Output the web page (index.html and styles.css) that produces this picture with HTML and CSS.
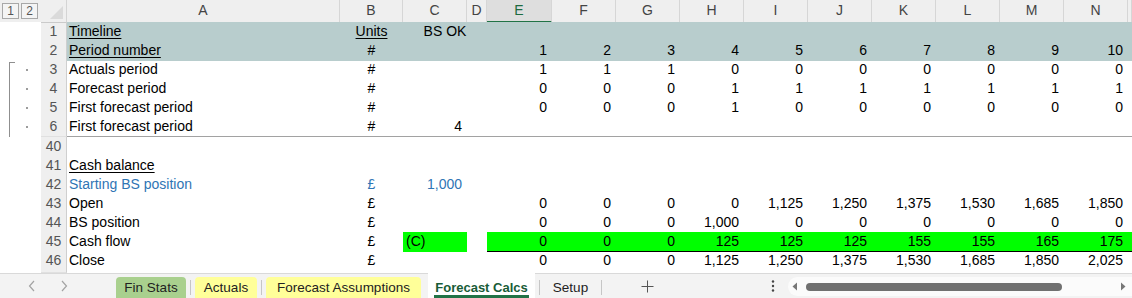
FILE: index.html
```html
<!DOCTYPE html>
<html lang="en">
<head>
    <meta charset="UTF-8">
    <title>Forecast Calcs</title>
    <link rel="stylesheet" href="styles.css">
</head>
<body>
<div class="app">
    <div class="sheet">
        <div class="colhead">
            <div class="levels"><span class="lvl">1</span><span class="lvl">2</span></div>
            <div class="corner"></div>
            <div class="ch">A</div>
            <div class="ch">B</div>
            <div class="ch">C</div>
            <div class="ch">D</div>
            <div class="ch sel">E</div>
            <div class="ch">F</div>
            <div class="ch">G</div>
            <div class="ch">H</div>
            <div class="ch">I</div>
            <div class="ch">J</div>
            <div class="ch">K</div>
            <div class="ch">L</div>
            <div class="ch">M</div>
            <div class="ch">N</div>
            <div class="ch"></div>
        </div>

        <div class="row band">
            <div class="gut"></div><div class="rh">1</div>
            <div class="c"><u>Timeline</u></div>
            <div class="c ctr"><u>Units</u></div>
            <div class="c ctr span2">BS OK</div>
            <div class="c"></div><div class="c"></div><div class="c"></div><div class="c"></div><div class="c"></div>
            <div class="c"></div><div class="c"></div><div class="c"></div><div class="c"></div><div class="c"></div>
            <div class="c"></div>
        </div>
        <div class="row band">
            <div class="gut"></div><div class="rh">2</div>
            <div class="c"><u>Period number</u></div>
            <div class="c ctr">#</div>
            <div class="c"></div><div class="c"></div>
            <div class="c n">1</div><div class="c n">2</div><div class="c n">3</div><div class="c n">4</div><div class="c n">5</div>
            <div class="c n">6</div><div class="c n">7</div><div class="c n">8</div><div class="c n">9</div><div class="c n">10</div>
            <div class="c"></div>
        </div>
        <div class="row">
            <div class="gut grp grp-top"><span class="dot"></span></div><div class="rh">3</div>
            <div class="c">Actuals period</div>
            <div class="c ctr">#</div>
            <div class="c"></div><div class="c"></div>
            <div class="c n">1</div><div class="c n">1</div><div class="c n">1</div><div class="c n">0</div><div class="c n">0</div>
            <div class="c n">0</div><div class="c n">0</div><div class="c n">0</div><div class="c n">0</div><div class="c n">0</div>
            <div class="c"></div>
        </div>
        <div class="row">
            <div class="gut grp"><span class="dot"></span></div><div class="rh">4</div>
            <div class="c">Forecast period</div>
            <div class="c ctr">#</div>
            <div class="c"></div><div class="c"></div>
            <div class="c n">0</div><div class="c n">0</div><div class="c n">0</div><div class="c n">1</div><div class="c n">1</div>
            <div class="c n">1</div><div class="c n">1</div><div class="c n">1</div><div class="c n">1</div><div class="c n">1</div>
            <div class="c"></div>
        </div>
        <div class="row">
            <div class="gut grp"><span class="dot"></span></div><div class="rh">5</div>
            <div class="c">First forecast period</div>
            <div class="c ctr">#</div>
            <div class="c"></div><div class="c"></div>
            <div class="c n">0</div><div class="c n">0</div><div class="c n">0</div><div class="c n">1</div><div class="c n">0</div>
            <div class="c n">0</div><div class="c n">0</div><div class="c n">0</div><div class="c n">0</div><div class="c n">0</div>
            <div class="c"></div>
        </div>
        <div class="row">
            <div class="gut grp"><span class="dot"></span></div><div class="rh">6</div>
            <div class="c">First forecast period</div>
            <div class="c ctr">#</div>
            <div class="c n">4</div><div class="c"></div>
            <div class="c"></div><div class="c"></div><div class="c"></div><div class="c"></div><div class="c"></div>
            <div class="c"></div><div class="c"></div><div class="c"></div><div class="c"></div><div class="c"></div>
            <div class="c"></div>
        </div>

        <div class="row hidden-above">
            <div class="gut"></div><div class="rh">40</div>
            <div class="c"></div>
        </div>
        <div class="row">
            <div class="gut"></div><div class="rh">41</div>
            <div class="c"><u>Cash balance</u></div>
        </div>
        <div class="row blue">
            <div class="gut"></div><div class="rh">42</div>
            <div class="c">Starting BS position</div>
            <div class="c ctr">£</div>
            <div class="c n">1,000</div>
        </div>
        <div class="row">
            <div class="gut"></div><div class="rh">43</div>
            <div class="c">Open</div>
            <div class="c ctr">£</div>
            <div class="c"></div><div class="c"></div>
            <div class="c n">0</div><div class="c n">0</div><div class="c n">0</div><div class="c n">0</div><div class="c n">1,125</div>
            <div class="c n">1,250</div><div class="c n">1,375</div><div class="c n">1,530</div><div class="c n">1,685</div><div class="c n">1,850</div>
            <div class="c"></div>
        </div>
        <div class="row">
            <div class="gut"></div><div class="rh">44</div>
            <div class="c">BS position</div>
            <div class="c ctr">£</div>
            <div class="c"></div><div class="c"></div>
            <div class="c n">0</div><div class="c n">0</div><div class="c n">0</div><div class="c n">1,000</div><div class="c n">0</div>
            <div class="c n">0</div><div class="c n">0</div><div class="c n">0</div><div class="c n">0</div><div class="c n">0</div>
            <div class="c"></div>
        </div>
        <div class="row">
            <div class="gut"></div><div class="rh">45</div>
            <div class="c">Cash flow</div>
            <div class="c ctr">£</div>
            <div class="c green flag">(C)</div><div class="c"></div>
            <div class="c n green total">0</div><div class="c n green total">0</div><div class="c n green total">0</div><div class="c n green total">125</div><div class="c n green total">125</div>
            <div class="c n green total">125</div><div class="c n green total">155</div><div class="c n green total">155</div><div class="c n green total">165</div><div class="c n green total">175</div>
            <div class="c green total"></div>
        </div>
        <div class="row">
            <div class="gut"></div><div class="rh">46</div>
            <div class="c">Close</div>
            <div class="c ctr">£</div>
            <div class="c"></div><div class="c"></div>
            <div class="c n">0</div><div class="c n">0</div><div class="c n">0</div><div class="c n">1,125</div><div class="c n">1,250</div>
            <div class="c n">1,375</div><div class="c n">1,530</div><div class="c n">1,685</div><div class="c n">1,850</div><div class="c n">2,025</div>
            <div class="c"></div>
        </div>
        <div class="row stub">
            <div class="gut"></div><div class="rh"></div>
        </div>
    </div>

    <div class="tabbar">
        <div class="tabnav">
            <svg width="8" height="12" viewBox="0 0 8 12"><path d="M6 1 1.5 6 6 11" fill="none" stroke="#a3a3a3" stroke-width="1.2"/></svg>
            <svg width="8" height="12" viewBox="0 0 8 12"><path d="M2 1 6.5 6 2 11" fill="none" stroke="#a3a3a3" stroke-width="1.2"/></svg>
        </div>
        <div class="tab fin">Fin Stats</div>
        <div class="tabsep"></div>
        <div class="tab act">Actuals</div>
        <div class="tabsep"></div>
        <div class="tab assm">Forecast Assumptions</div>
        <div class="tab current"><span>Forecast Calcs</span></div>
        <div class="tabsep"></div>
        <div class="tab setup">Setup</div>
        <div class="tabsep"></div>
        <div class="addsheet">
            <svg width="13" height="13" viewBox="0 0 13 13"><path d="M6.5 0.5v12M0.5 6.5h12" stroke="#555" stroke-width="1"/></svg>
        </div>
        <div class="more">
            <svg width="4" height="14" viewBox="0 0 4 14"><circle cx="2" cy="2.5" r="1.2" fill="#444"/><circle cx="2" cy="7" r="1.2" fill="#444"/><circle cx="2" cy="11.5" r="1.2" fill="#444"/></svg>
        </div>
        <div class="hscroll">
            <svg width="6" height="9" viewBox="0 0 6 9"><path d="M5 0.5v8L0.5 4.5z" fill="#777"/></svg>
            <div class="thumb"></div>
            <svg class="right" width="6" height="9" viewBox="0 0 6 9"><path d="M1 0.5v8l4.5-4z" fill="#777"/></svg>
        </div>
    </div>
</div>
</body>
</html>
```

FILE: styles.css
```css
body {
    margin: 0;
    background-color: #fff;
    color: #000;
    font-family: "Liberation Sans", Arial, sans-serif;
}
.app {
    width: 1132px;
    height: 298px;
    overflow: hidden;
    display: flex;
    flex-direction: column;
}
.sheet {
    flex: 1;
    overflow: hidden;
}
.colhead,
.row {
    display: grid;
    grid-template-columns: 41px 26px 273px 63px 64px 20px 65px repeat(9, 64px) 4px;
}

/* column headers */
.colhead {
    height: 22px;
    background-color: #efefef;
}
.colhead > div {
    box-sizing: border-box;
    border-bottom: 1px solid #cacaca;
}
.levels {
    display: flex;
    gap: 2px;
    padding: 3px 0 0 2px;
}
.lvl {
    width: 17px;
    height: 16px;
    box-sizing: border-box;
    border: 1px solid #a8a8a8;
    background-color: #f4f4f4;
    color: #555;
    font-size: 12px;
    line-height: 15px;
    text-align: center;
}
.corner {
    position: relative;
    border-right: 1px solid #d4d4d4;
}
.corner::after {
    content: "";
    position: absolute;
    right: 3px;
    bottom: 3px;
    border-style: solid;
    border-width: 0 0 13px 13px;
    border-color: transparent transparent #dadada transparent;
}
.ch {
    font-size: 14px;
    color: #444;
    text-align: center;
    line-height: 21px;
    border-right: 1px solid #d6d6d6;
}
.colhead .ch.sel {
    background-color: #dedede;
    color: #1d6b40;
    border-bottom: 2px solid #217346;
}

/* rows */
.row {
    height: 19px;
}
.gut {
    position: relative;
    background-color: #fff;
}
.rh {
    box-sizing: border-box;
    background-color: #efefef;
    color: #555;
    font-size: 14px;
    line-height: 19px;
    text-align: center;
    border-bottom: 1px solid #e0e0e0;
    border-right: 1px solid #cfcfcf;
}
.c {
    box-sizing: border-box;
    font-size: 14px;
    line-height: 19px;
    padding: 0 2px;
    white-space: nowrap;
}
.c u {
    text-underline-offset: 2px;
}
.ctr {
    text-align: center;
}
.span2 {
    grid-column: span 2;
}
.n {
    text-align: right;
    padding-right: 5px;
}
.band .c {
    background-color: #b8cdcd;
}
.blue .c {
    color: #2f75b5;
}
.green {
    background-color: #00ff00;
}
.flag {
    padding-left: 3px;
}
.total {
    border-bottom: 1px solid #000;
}
.hidden-above {
    height: 20px;
    box-sizing: border-box;
    border-top: 1px solid #a2a2a2;
}
.stub {
    height: 3px;
}

/* outline group bracket */
.grp::before {
    content: "";
    position: absolute;
    left: 9px;
    top: 0;
    bottom: 0;
    border-left: 1px solid #8f8f8f;
}
.grp-top::before {
    top: 2px;
    width: 5px;
    border-top: 1px solid #8f8f8f;
}
.dot {
    position: absolute;
    left: 26px;
    top: 9px;
    width: 2px;
    height: 2px;
    background-color: #9c9c9c;
}

/* sheet tabs */
.tabbar {
    height: 25px;
    flex-shrink: 0;
    box-sizing: border-box;
    display: flex;
    align-items: flex-end;
    background-color: #f3f3f3;
    border-top: 1px solid #d9d9d9;
    font-size: 13.5px;
    color: #222;
}
.tabbar > * {
    flex-shrink: 0;
}
.tabnav {
    width: 116px;
    height: 24px;
    display: flex;
    align-items: center;
    gap: 24px;
    padding-left: 28px;
    box-sizing: border-box;
}
.tab {
    height: 21px;
    box-sizing: border-box;
    padding-top: 1px;
    line-height: 20px;
    text-align: center;
    border-radius: 4px 4px 0 0;
}
.fin {
    width: 70px;
    background-color: #a9d08e;
}
.act {
    width: 62px;
    background-color: #ffff99;
}
.assm {
    width: 155px;
    background-color: #ffff99;
}
.tabsep {
    width: 1px;
    height: 15px;
    margin: 0 4px 3px;
    background-color: #c6c6c6;
}
.tab.current {
    width: 107px;
    height: 25px;
    margin-left: 7px;
    border-radius: 0;
    background-color: #fff;
    display: flex;
    align-items: flex-end;
    justify-content: center;
    padding: 0;
    font-size: 13px;
    font-weight: bold;
    color: #185c37;
}
.tab.current span {
    line-height: 15px;
    padding: 0 1px;
    border-bottom: 3px solid #217346;
}
.setup {
    width: 53px;
}
.addsheet {
    width: 82px;
    height: 24px;
    display: flex;
    align-items: center;
    justify-content: center;
}
.more {
    width: 90px;
    height: 24px;
    display: flex;
    align-items: center;
    justify-content: flex-end;
    padding-right: 3px;
    box-sizing: border-box;
}
.tabbar .hscroll {
    flex: 1;
    flex-shrink: 1;
    min-width: 0;
    height: 19px;
    margin-bottom: 2px;
    margin-left: 10px;
    border-radius: 10px 0 0 10px;
    background-color: #fbfbfb;
    display: flex;
    align-items: center;
    padding-left: 4px;
}
.thumb {
    width: 256px;
    height: 8px;
    margin-left: 8px;
    border-radius: 4px;
    background-color: #707070;
}
.hscroll .right {
    margin-left: auto;
    margin-right: 6px;
}
```
